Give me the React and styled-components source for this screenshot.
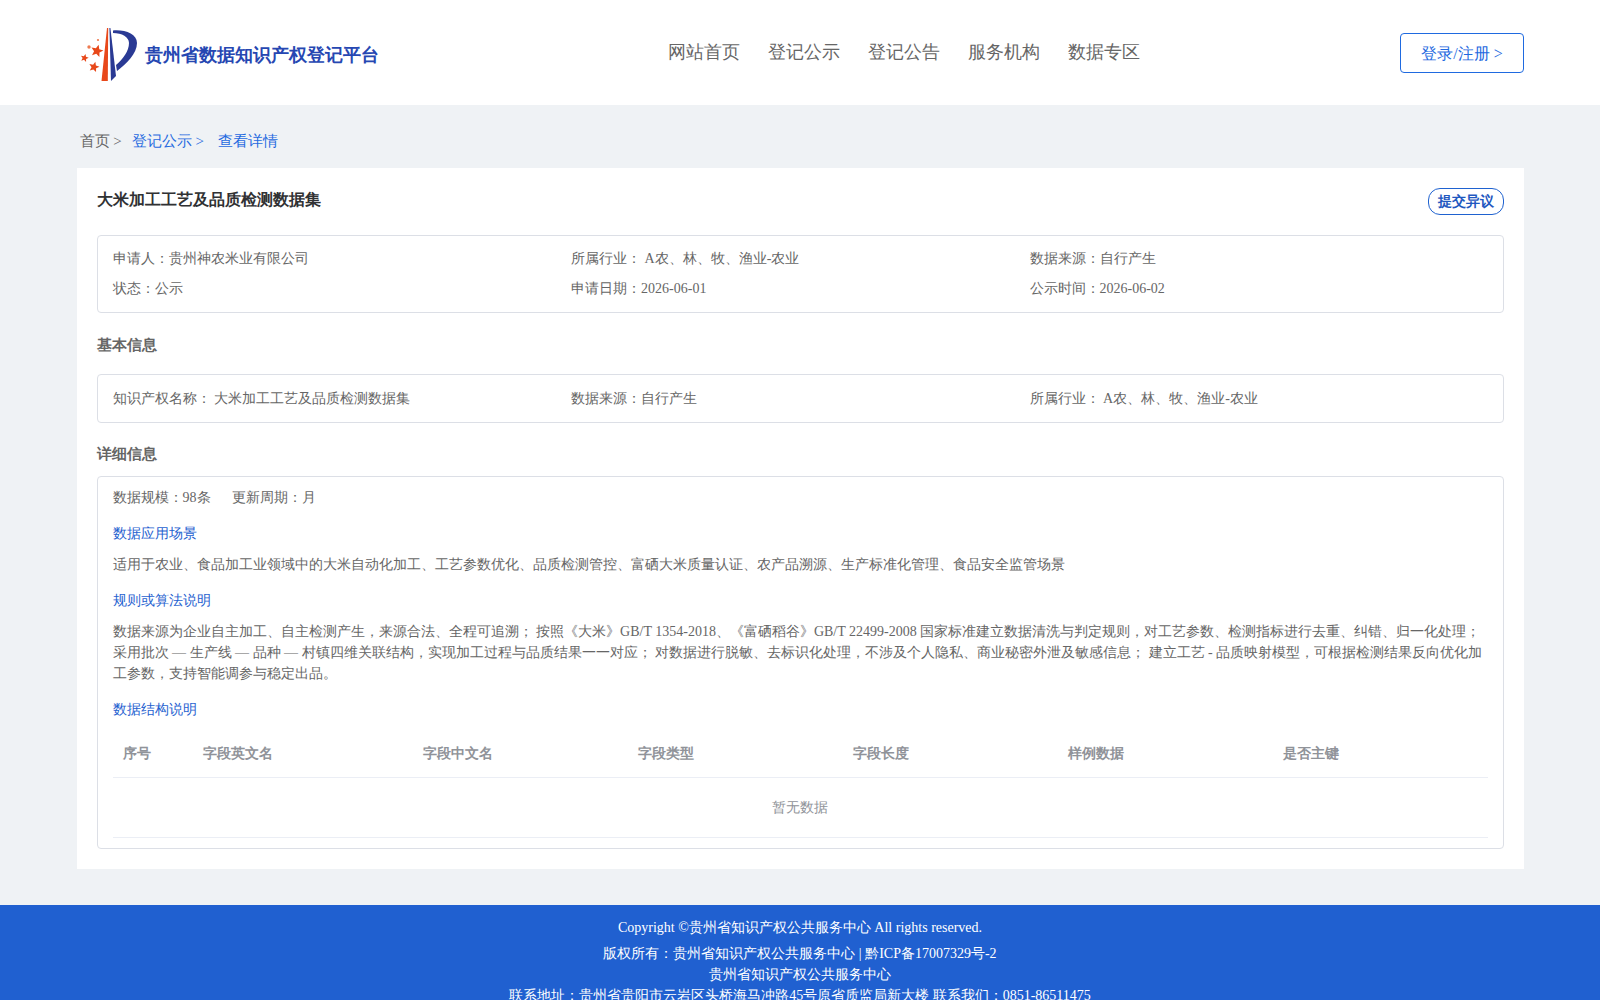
import React from 'react';
import styled, { createGlobalStyle } from 'styled-components';

const GlobalStyle = createGlobalStyle`
    html, body {
        margin: 0;
        padding: 0;
        background: #eff2f5;
        font-family: "Liberation Serif", serif;
        font-size: 14px;
        color: #666;
    }
`;

const Header = styled.header`
    height: 105px;
    background: #fff;
    padding: 0 76px 0 80px;
    display: flex;
    align-items: center;
    justify-content: space-between;
`;

const Brand = styled.div`
    display: flex;
    align-items: center;
    gap: 7px;
    width: 300px;
    margin-top: 5px;
`;

const BrandName = styled.span`
    font-size: 18px;
    font-weight: 700;
    color: #2647b2;
`;

const Nav = styled.nav`
    display: flex;
    gap: 28px;
    margin: 0 0 2px 27px;
`;

const NavItem = styled.a`
    font-size: 18px;
    color: #666;
`;

const LoginButton = styled.button`
    width: 124px;
    height: 40px;
    padding: 3px 0 0;
    background: #fff;
    border: 1px solid #1f6ae0;
    border-radius: 4px;
    color: #1f6ae0;
    font: inherit;
    font-size: 16px;
`;

const Main = styled.main`
    margin: 0 76px 0 76.6px;
    padding-bottom: 36px;
`;

const Breadcrumb = styled.div`
    height: 63px;
    padding: 10px 0 0 3px;
    box-sizing: border-box;
    display: flex;
    align-items: center;
    font-size: 15px;
`;

const Crumb = styled.span`
    color: ${props => (props.$active ? '#1f6ae0' : '#666')};
    margin-right: ${props => props.$gap || 0}px;
`;

const Card = styled.section`
    background: #fff;
    padding: 20px;
`;

const TitleRow = styled.div`
    display: flex;
    justify-content: space-between;
    align-items: flex-start;
    margin-bottom: 20px;
`;

const Title = styled.h1`
    margin: 0;
    font-size: 16px;
    line-height: 23px;
    color: #303133;
`;

const ObjectionButton = styled.button`
    width: 76px;
    height: 27px;
    padding: 0;
    background: #fff;
    border: 1px solid #1f62d0;
    border-radius: 12px;
    color: #1f58c0;
    font: inherit;
    font-size: 14px;
    font-weight: 700;
`;

const Panel = styled.div`
    border: 1px solid #dcdfe6;
    border-radius: 4px;
    padding: ${props => props.$padding};
`;

const InfoGrid = styled.div`
    display: grid;
    grid-template-columns: repeat(3, 1fr);
    row-gap: 8px;
`;

const InfoCell = styled.div`
    line-height: 22px;
`;

const SectionTitle = styled.h2`
    margin: 0;
    font-size: 15px;
    line-height: 20px;
    color: #666;
    padding: ${props => props.$padding};
`;

const MetaRow = styled.div`
    display: flex;
    gap: 21px;
    line-height: 20px;
`;

const BlueLabel = styled.div`
    color: #1f62d0;
    line-height: 20px;
    margin: ${props => props.$margin};
`;

const Paragraph = styled.p`
    margin: 0;
    line-height: 21px;
`;

const TableHead = styled.div`
    display: grid;
    grid-template-columns: 80px 220px repeat(5, 1fr);
    height: 47px;
    align-items: center;
    border-bottom: 1px solid #ebeef5;
    margin-top: 10px;
`;

const HeadCell = styled.div`
    padding-left: 10px;
    font-weight: 700;
    color: #909399;
`;

const EmptyRow = styled.div`
    height: 59px;
    display: flex;
    align-items: center;
    justify-content: center;
    color: #909399;
    border-bottom: 1px solid #ebeef5;
`;

const Footer = styled.footer`
    background: #2060d0;
    color: #fff;
    text-align: center;
    padding-top: 12px;
    line-height: 21px;
`;

const Copyright = styled.div`
    margin-bottom: 5px;
`;

const starPoints = (cx, cy, r) => {
    const points = [];
    for (let i = 0; i < 10; i++) {
        const radius = i % 2 ? r * 0.45 : r;
        const angle = -Math.PI / 2 + 0.25 + (i * Math.PI) / 5;
        points.push(`${cx + radius * Math.cos(angle)},${cy + radius * Math.sin(angle)}`);
    }
    return points.join(' ');
};

const Logo = () => (
    <svg width="58" height="56" viewBox="0 0 58 56">
        <path d="M21.500 54 L27 1 L28.200 1 L27.800 54 Z" fill="#e8481a" />
        <path d="M29.400 1 L30.400 1 L36 49 L31 54 Z" fill="#2a3a94" />
        <path d="M33 3.500 C45 2.500 57 7 57 16 C57 27 46 37 37 44 L36 38 C43 32 49 24 49 16 C49 10 42 6 33 6 Z" fill="#2a3a94" />
        <polygon points={starPoints(17, 24, 6.500)} fill="#e8481a" />
        <polygon points={starPoints(4.500, 31, 4.200)} fill="#e8481a" />
        <polygon points={starPoints(14, 40, 5.500)} fill="#e8481a" />
        <circle cx="9" cy="20" r="1.700" fill="#ee7a50" />
        <circle cx="18" cy="13" r="1.100" fill="#ee7a50" />
    </svg>
);

const columns = ['序号', '字段英文名', '字段中文名', '字段类型', '字段长度', '样例数据', '是否主键'];

const App = () => (
    <>
        <GlobalStyle />
        <Header>
            <Brand>
                <Logo />
                <BrandName>贵州省数据知识产权登记平台</BrandName>
            </Brand>
            <Nav>
                <NavItem>网站首页</NavItem>
                <NavItem>登记公示</NavItem>
                <NavItem>登记公告</NavItem>
                <NavItem>服务机构</NavItem>
                <NavItem>数据专区</NavItem>
            </Nav>
            <LoginButton>登录/注册 &gt;</LoginButton>
        </Header>
        <Main>
            <Breadcrumb>
                <Crumb $gap={10}>首页 &gt;</Crumb>
                <Crumb $active $gap={14}>登记公示 &gt;</Crumb>
                <Crumb $active>查看详情</Crumb>
            </Breadcrumb>
            <Card>
                <TitleRow>
                    <Title>大米加工工艺及品质检测数据集</Title>
                    <ObjectionButton>提交异议</ObjectionButton>
                </TitleRow>
                <Panel $padding="12px 15px">
                    <InfoGrid>
                        <InfoCell>申请人：贵州神农米业有限公司</InfoCell>
                        <InfoCell>所属行业： A农、林、牧、渔业-农业</InfoCell>
                        <InfoCell>数据来源：自行产生</InfoCell>
                        <InfoCell>状态：公示</InfoCell>
                        <InfoCell>申请日期：2026-06-01</InfoCell>
                        <InfoCell>公示时间：2026-06-02</InfoCell>
                    </InfoGrid>
                </Panel>
                <SectionTitle $padding="22px 0 19px">基本信息</SectionTitle>
                <Panel $padding="13px 15px 12px">
                    <InfoGrid>
                        <InfoCell>知识产权名称： 大米加工工艺及品质检测数据集</InfoCell>
                        <InfoCell>数据来源：自行产生</InfoCell>
                        <InfoCell>所属行业： A农、林、牧、渔业-农业</InfoCell>
                    </InfoGrid>
                </Panel>
                <SectionTitle $padding="21px 0 12px">详细信息</SectionTitle>
                <Panel $padding="11px 15px 10px">
                    <MetaRow>
                        <span>数据规模：98条</span>
                        <span>更新周期：月</span>
                    </MetaRow>
                    <BlueLabel $margin="16px 0 10px">数据应用场景</BlueLabel>
                    <Paragraph>适用于农业、食品加工业领域中的大米自动化加工、工艺参数优化、品质检测管控、富硒大米质量认证、农产品溯源、生产标准化管理、食品安全监管场景</Paragraph>
                    <BlueLabel $margin="16px 0 10px">规则或算法说明</BlueLabel>
                    <Paragraph>数据来源为企业自主加工、自主检测产生，来源合法、全程可追溯； 按照《大米》GB/T 1354-2018、《富硒稻谷》GB/T 22499-2008 国家标准建立数据清洗与判定规则，对工艺参数、检测指标进行去重、纠错、归一化处理； 采用批次 — 生产线 — 品种 — 村镇四维关联结构，实现加工过程与品质结果一一对应； 对数据进行脱敏、去标识化处理，不涉及个人隐私、商业秘密外泄及敏感信息； 建立工艺 - 品质映射模型，可根据检测结果反向优化加工参数，支持智能调参与稳定出品。</Paragraph>
                    <BlueLabel $margin="16px 0 0">数据结构说明</BlueLabel>
                    <TableHead>
                        {columns.map(name => <HeadCell key={name}>{name}</HeadCell>)}
                    </TableHead>
                    <EmptyRow>暂无数据</EmptyRow>
                </Panel>
            </Card>
        </Main>
        <Footer>
            <Copyright>Copyright ©贵州省知识产权公共服务中心 All rights reserved.</Copyright>
            <div>版权所有：贵州省知识产权公共服务中心 | 黔ICP备17007329号-2</div>
            <div>贵州省知识产权公共服务中心</div>
            <div>联系地址：贵州省贵阳市云岩区头桥海马冲路45号原省质监局新大楼 联系我们：0851-86511475</div>
        </Footer>
    </>
);

export default App;
